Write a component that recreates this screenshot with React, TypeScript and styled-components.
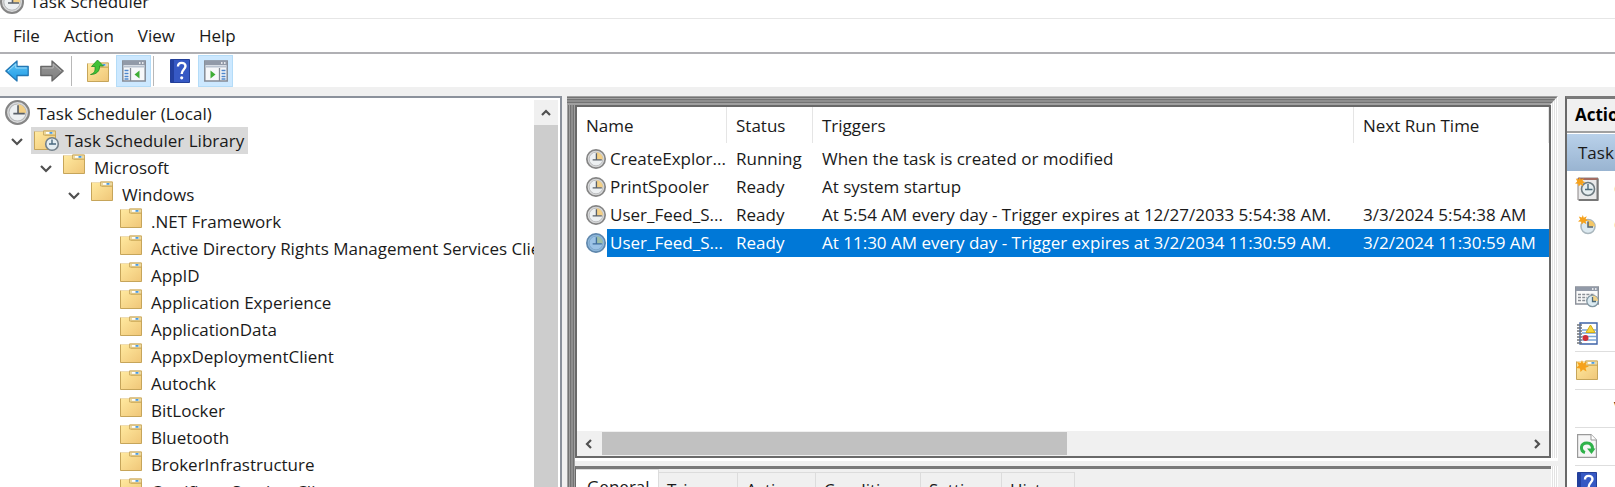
import React from 'react';
import styled, { createGlobalStyle, css } from 'styled-components';

const GlobalStyle = createGlobalStyle`
  * { box-sizing: border-box; }
  body { margin: 0; overflow: hidden; }
  button { font: inherit; color: inherit; background: none; border: 0; padding: 0; margin: 0; text-align: left; white-space: nowrap; }
  svg { display: block; flex: none; overflow: visible; }
`;

const Window = styled.div`
  display: flex;
  flex-direction: column;
  height: 100vh;
  overflow: hidden;
  background: #f0f0f0;
  color: #1a1a1a;
  font: 17px/24px 'Open Sans', 'Segoe UI', sans-serif;
`;

const TitleBar = styled.header`
  display: flex;
  align-items: flex-end;
  gap: 6px;
  height: 18px;
  flex: none;
  padding-bottom: 4px;
  overflow: hidden;
  background: #fff;
`;

const Title = styled.h1`
  margin: 0;
  font-size: 17px;
  line-height: 24px;
  font-weight: 400;
`;

const MenuBar = styled.nav`
  display: flex;
  flex: none;
  height: 36px;
  padding: 1px 0 0 1px;
  background: #fff;
  border-top: 1px solid #e6e6e6;
  border-bottom: 2px solid #b0b0b4;
`;

const MenuItem = styled.button`
  padding: 0 12px;
`;

const Toolbar = styled.div`
  display: flex;
  flex: none;
  gap: 1px;
  height: 33px;
  padding-top: 1px;
  background: #fff;
`;

const ToolButton = styled.button<{ $on?: boolean }>`
  display: flex;
  align-items: center;
  justify-content: center;
  width: 34px;
  ${p => p.$on && css`width: 35px; background: #cce8ff; border: 1px solid #b4dcf8;`}
`;

const ToolDivider = styled.div`
  width: 1px;
  margin: 1px 8px 1px 1px;
  background: #b8b8b8;
`;

const Main = styled.main`
  display: flex;
  flex: 1;
  min-height: 0;
  padding-top: 9px;
`;

const TreePane = styled.section`
  display: flex;
  width: 562px;
  flex: none;
  padding: 2px 2px 0 0;
  background: #fff;
  border-top: 2px solid #8b919b;
  border-right: 2px solid #8b919b;
`;

const Tree = styled.ul`
  flex: 1;
  min-width: 0;
  margin: 0;
  padding: 0;
  list-style: none;
  overflow: hidden;
`;

const TreeRow = styled.li<{ $indent: number }>`
  display: flex;
  height: 27px;
  padding-left: ${p => p.$indent}px;
  white-space: nowrap;
`;

const Expander = styled.button`
  display: flex;
  align-items: center;
  justify-content: center;
  width: 22px;
  margin: 0 0 0 6px;
`;

const TreeNode = styled.button<{ $selected?: boolean; $root?: boolean }>`
  display: flex;
  align-items: flex-start;
  gap: ${p => (p.$root ? 7 : 9)}px;
  margin-left: 3px;
  padding: 0 4px 0 ${p => (p.$root ? 2 : 3)}px;
  line-height: 27px;
  ${p => p.$selected && css`background: #d9d9d9;`}
`;

const VScroll = styled.div`
  display: flex;
  flex-direction: column;
  width: 24px;
  flex: none;
  background: #cdcdcd;
`;

const ScrollButton = styled.button`
  display: flex;
  flex: none;
  align-items: center;
  justify-content: center;
  width: 24px;
  height: 25px;
  background: #f0f0f0;
`;

const Center = styled.div`
  display: flex;
  flex: 1;
  flex-direction: column;
  min-width: 0;
  margin: 0 7px 0 5px;
  padding: 0 7px 0 8px;
  background: linear-gradient(90deg, #a0a0a0 1px, #737373 1px 2px, #a0a0a0 2px 3px, #737373 3px 4px, #8e8e8e 4px 6px, #737373 6px 7px, #a0a0a0 7px 8px, transparent 8px) left / 8px 100% no-repeat,
    linear-gradient(270deg, #fff 1px, #e3e3e3 1px 2px, #fff 2px 3px, #e3e3e3 3px 4px, #fff 4px 5px, #e3e3e3 5px 6px, #fff 6px 7px) right / 7px 100% no-repeat;
`;

const FrameTop = styled.div`
  flex: none;
  height: 9px;
  margin: 0 -7px 0 -8px;
  clip-path: polygon(0 0, 100% 0, calc(100% - 8px) 100%, 0 100%);
  background: linear-gradient(#a0a0a0 1px, #737373 1px 2px, #a0a0a0 2px 3px, #737373 3px 4px, #8e8e8e 4px 6px, #737373 6px 7px, #a0a0a0 7px 9px);
`;

const TaskPane = styled.section`
  display: flex;
  flex: 1;
  flex-direction: column;
  min-height: 0;
  border: 2px solid #696969;
  background: #fff;
`;

const TaskTable = styled.table`
  width: 100%;
  table-layout: fixed;
  border-collapse: separate;
  border-spacing: 0;
`;

const HeadCell = styled.th<{ $width?: number }>`
  width: ${p => (p.$width ? `${p.$width}px` : 'auto')};
  height: 36px;
  padding: 1px 9px 0 9px;
  font-weight: 400;
  text-align: left;
  background: linear-gradient(#e5e5e5, #e5e5e5) right / 1px 100% no-repeat;
`;

const Cell = styled.td<{ $selected?: boolean }>`
  height: 28px;
  padding: 0 0 0 9px;
  line-height: 28px;
  white-space: nowrap;
  overflow: hidden;
  ${p => p.$selected && css`background: #0078d7; color: #fff;`}
`;

const NameCell = styled(Cell)`
  background: none;
`;

const NameBox = styled.div`
  display: flex;
  align-items: center;
  gap: 1px;
`;

const NameLabel = styled.span<{ $selected?: boolean }>`
  flex: 1;
  padding-left: 3px;
  ${p => p.$selected && css`background: #0078d7; color: #fff;`}
`;

const TableBody = styled.tbody`
  &::before { content: ''; display: block; height: 2px; }
`;

const HScroll = styled.div`
  display: flex;
  justify-content: space-between;
  flex: none;
  height: 25px;
  margin-top: auto;
  background: #f0f0f0;
`;

const HTrack = styled.div`
  flex: 1;
  padding: 1px 0 1px 1px;
`;

const HThumb = styled.div`
  width: 50.4%;
  height: 100%;
  background: #c1c1c1;
`;

const PaneGap = styled.div`
  flex: none;
  height: 8px;
  margin-right: -7px;
  border-top: 3px solid #fff;
  background: #f0f0f0;
`;

const DetailPane = styled.section`
  flex: none;
  height: 21px;
  overflow: hidden;
  padding-right: 3px;
  border-top: 3px solid #7a7a7a;
  border-left: 1px solid #696969;
  background: #f0f0f0;
`;

const Tabs = styled.div`
  display: flex;
  align-items: flex-start;
`;

const Tab = styled.button<{ $width: number; $active?: boolean }>`
  width: ${p => p.$width}px;
  height: 36px;
  margin-top: 3px;
  padding: 0 8px;
  border: 1px solid #dcdcdc;
  border-left: 0;
  ${p => p.$active && css`margin-top: 0; padding: 0 11px; background: #fff;`}
`;

const ActionPane = styled.aside`
  width: 50px;
  flex: none;
  overflow: hidden;
  border-top: 3px solid #7a7a7a;
  border-left: 2px solid #696969;
  background: #fff;
`;

const ActionTitle = styled.h2`
  margin: 0;
  padding: 3px 8px 4px;
  font-size: 17px;
  line-height: 25px;
  font-weight: 700;
  color: #000;
  background: #f0f0f0;
  border-bottom: 2px solid #a0a0a0;
  white-space: nowrap;
`;

const ActionGroup = styled.button`
  display: block;
  width: 100%;
  height: 38px;
  padding: 0 11px;
  overflow: hidden;
  background: linear-gradient(#b9d1ea, #99b4d1);
  border-top: 1px solid #fff;
`;

const ActionItem = styled.button<{ $line?: boolean }>`
  display: flex;
  align-items: center;
  gap: 15px;
  width: 100%;
  height: ${p => (p.$line ? 38 : 36)}px;
  padding-left: 8px;
  ${p => p.$line && css`background: linear-gradient(#dedede, #dedede) 8px 0 / 100% 1px no-repeat;`}
`;

const IconSlot = styled.span`
  display: flex;
  justify-content: center;
  width: 24px;
  flex: none;
`;

function Clock({ size = 20, tint = false }: { size?: number; tint?: boolean }) {
  return (
    <svg width={size} height={size} viewBox="0 0 24 24">
      <circle cx="12" cy="12" r="11" fill={tint ? '#8fb8dc' : '#d9dadb'} stroke={tint ? '#5f87ac' : '#858585'} strokeWidth="2" />
      <circle cx="12" cy="12" r="8.2" fill={tint ? '#9cc3e6' : '#edf0f2'} stroke={tint ? '#7ba3c8' : '#b4b6b8'} />
      <path d="M12.5 4a8 8 0 0 1 7.7 8.5h-7.7z" fill={tint ? '#9fbfa8' : '#f3cf85'} />
      <path d="M12.5 5v8H19M8 13h4" fill="none" stroke={tint ? '#3f6e9c' : '#5a6068'} strokeWidth="1.6" />
    </svg>
  );
}

function FolderShape() {
  return (
    <>
      <path d="M.5 1.500h9v-1h12v19H.5z" fill="#dfbc68" />
      <path d="M1 2h8.500l1.500 4H21v13H1z" fill="url(#folder)" />
      <path d="M.5 1.500v18h21v-16" fill="none" stroke="#c6a55a" />
      <path d="M9.500 1h12v4h-12z" fill="#ecd9a0" stroke="#c6a55a" strokeWidth=".8" />
      <path d="M12 2h7v1.800h-7z" fill="#fff" />
      <path d="M15.500 2h3v1.800h-3z" fill="#4b9be0" />
    </>
  );
}

function Folder() {
  return <svg width="22" height="20" viewBox="0 0 22 20"><FolderShape /></svg>;
}

function SmallClock() {
  return (
    <>
      <circle cx="18" cy="17" r="6.300" fill="#e4edf2" stroke="#73808a" strokeWidth="1.600" />
      <path d="M18 12.500V17h4M15 17h3" fill="none" stroke="#4a6a80" strokeWidth="1.400" />
    </>
  );
}

function LibraryFolder() {
  return <svg width="22" height="24" viewBox="0 0 22 24"><g transform="translate(0 3)"><FolderShape /></g><SmallClock /></svg>;
}

function Star() {
  return <path d="M6 0l1.200 3.400L11 1.500 9.500 5l3.500 1.500-3.500 1.200 1 3.800-3.500-2L4.500 12 4 8.500 0 8l2.800-2.500L1 2l3.800 1z" fill="#f6a21c" />;
}

function NewFolder() {
  return <svg width="22" height="20" viewBox="0 0 22 20"><FolderShape /><Star /></svg>;
}

function UpFolder() {
  return (
    <svg width="22" height="22" viewBox="0 0 22 22">
      <g transform="translate(0 2)"><FolderShape /></g>
      <path d="M3.500 14.500c4-1 5-4 4.500-8H4.500L10.500 0l6 6H12.500c.5 5-3 8.500-9 8.500z" fill="#42c236" stroke="#1f9123" strokeWidth=".8" />
    </svg>
  );
}

function Arrow({ back = false }: { back?: boolean }) {
  return (
    <svg width="24" height="22" viewBox="0 0 24 22">
      <g transform={back ? undefined : 'translate(24 0) scale(-1 1)'}>
        <path d="M.8 11L12 1v5.500h11.200v9H12V21z" fill={back ? 'url(#blue)' : 'url(#gray)'} stroke={back ? '#2377b4' : '#686868'} strokeWidth="1.300" strokeLinejoin="round" />
        <path d="M3 11l7.800-7V8h11" fill="none" stroke={back ? '#9fdcfa' : '#b5b5b5'} />
      </g>
    </svg>
  );
}

function PaneIcon({ right = false }: { right?: boolean }) {
  return (
    <svg width="24" height="22" viewBox="0 0 24 22">
      <path d="M.8 1h22.400v20H.8z" fill="#f7f8fa" stroke="#858b96" strokeWidth="1.500" />
      <path d="M1 1h22v4H1z" fill="#929aa8" />
      <path d="M17 3h1.500M20 3h1.500" stroke="#fff" strokeWidth="1.500" />
      <path d="M1 6.500h22" stroke="#b9c2cf" strokeWidth="2" />
      <path d={right ? 'M15.500 8v13' : 'M8.500 8v13'} stroke="#858b96" strokeWidth="1.300" />
      <path d={right ? 'M17.500 10.500h4M17.500 13.500h4M17.500 16.500h4M17.500 19h4' : 'M2.500 10.500h4M2.500 13.500h4M2.500 16.500h4M2.500 19h4'} stroke="#4e86cc" strokeWidth="1.500" />
      <path d={right ? 'M6.500 10.500l5 4-5 4z' : 'M17.500 10.500l-5 4 5 4z'} fill="#40ae35" />
    </svg>
  );
}

function HelpIcon() {
  return (
    <svg width="20" height="24" viewBox="0 0 20 24">
      <path d="M.5.5h19v23H.5z" fill="#3659c4" stroke="#233f99" />
      <path d="M1 1h3v22H1z" fill="#2340a0" />
      <path d="M8 7.500c0-5 7.500-4.500 7.500-.5 0 3.500-3.800 3.700-3.800 8" fill="none" stroke="#fff" strokeWidth="2.400" />
      <circle cx="11.700" cy="18.800" r="1.600" fill="#fff" />
    </svg>
  );
}

function BasicTaskIcon() {
  return (
    <svg width="24" height="24" viewBox="0 0 24 24">
      <path d="M3 1h20v22H3z" fill="#e9e9ea" stroke="#8a8585" />
      <path d="M3 1h20v2H3z" fill="#a46c62" />
      <path d="M22.500 2v21H4" fill="none" stroke="#777" strokeWidth="2" />
      <circle cx="13" cy="12" r="6.500" fill="#e6eef1" stroke="#6d7a80" strokeWidth="1.600" />
      <path d="M13 7v5.500h4.500M10 12.500h3" fill="none" stroke="#4d6b7a" strokeWidth="1.400" />
      <g transform="scale(.8)"><Star /></g>
    </svg>
  );
}

function CreateTaskIcon() {
  return (
    <svg width="18" height="20" viewBox="0 0 18 20">
      <circle cx="10" cy="11.500" r="7" fill="#dce9f0" stroke="#a9b6bd" strokeWidth="1.600" />
      <path d="M10 5a7 7 0 0 1 7 6.500h-7z" fill="#f4c766" />
      <path d="M10 6.500V12h5" fill="none" stroke="#56646c" strokeWidth="1.500" />
      <g transform="scale(.8)"><Star /></g>
    </svg>
  );
}

function RunningIcon() {
  return (
    <svg width="24" height="22" viewBox="0 0 24 22">
      <path d="M.7 1h22.600v17H.7z" fill="#fafafa" stroke="#8c919a" strokeWidth="1.400" />
      <path d="M1 1h22v4H1z" fill="#929aa8" />
      <path d="M17 3h1.500M20 3h1.500" stroke="#fff" strokeWidth="1.500" />
      <path d="M3 8.500h17M3 11.500h9M3 14.500h9" stroke="#8a8f96" strokeWidth="1.300" strokeDasharray="3 1.200" />
      <circle cx="17.500" cy="15" r="5.700" fill="#dcebf2" stroke="#8297a2" strokeWidth="1.300" />
      <path d="M17.500 9.500a5.500 5.500 0 0 1 5.500 5.500h-5.500z" fill="#f1d18a" />
      <path d="M17.500 11v4.500h3.500" fill="none" stroke="#4d6b7a" strokeWidth="1.300" />
    </svg>
  );
}

function HistoryIcon() {
  return (
    <svg width="22" height="23" viewBox="0 0 22 23">
      <path d="M4 1h17v21H4z" fill="#fff" stroke="#3e63a8" strokeWidth="1.400" />
      <path d="M6 8h14M6 11h14M6 14.500h14M6 18h14" stroke="#78a7d8" strokeWidth="1.500" />
      <path d="M1 3h5M1 6h5M1 9h5M1 12h5M1 15h5M1 18h5M1 21h5" stroke="#70747a" strokeWidth="1.300" />
      <path d="M14.500 3l4.500 7.500h-9z" fill="#f5d63a" stroke="#d4ac18" />
      <circle cx="9.500" cy="16" r="3" fill="#d02e38" />
    </svg>
  );
}

function RefreshIcon() {
  return (
    <svg width="20" height="24" viewBox="0 0 20 24">
      <path d="M.6.6H14l5.400 5.400v17.400H.6z" fill="#f6f6f6" stroke="#9a9a9a" strokeWidth="1.200" />
      <path d="M14 .6V6h5.400" fill="#fff" stroke="#9a9a9a" />
      <path d="M8 18.500c-5-1.500-5-9.500 2-9.500 4 0 5.500 2.500 5.500 6" fill="none" stroke="#2fb24a" strokeWidth="3" />
      <path d="M10 14.500h8.500L14.500 20z" fill="#2fb24a" />
    </svg>
  );
}

function Chevron({ d }: { d: string }) {
  return <svg width="10" height="10" viewBox="0 0 10 10"><path d={d} fill="none" stroke="#505050" strokeWidth="2.200" /></svg>;
}

function Gradients() {
  return (
    <svg width="0" height="0" style={{ position: 'absolute' }} aria-hidden="true">
      <defs>
        <linearGradient id="folder" x1="0" y1="0" x2="1" y2="1"><stop stopColor="#ffe99f" /><stop offset="1" stopColor="#f0c779" /></linearGradient>
        <linearGradient id="blue" x1="0" y1="0" x2="0" y2="1"><stop stopColor="#5cc3f5" /><stop offset="1" stopColor="#1f9be6" /></linearGradient>
        <linearGradient id="gray" x1="0" y1="0" x2="0" y2="1"><stop stopColor="#979797" /><stop offset="1" stopColor="#808080" /></linearGradient>
      </defs>
    </svg>
  );
}

const branches = [
  { label: 'Task Scheduler Library', level: 0, selected: true },
  { label: 'Microsoft', level: 1 },
  { label: 'Windows', level: 2 },
];

const leaves = [
  '.NET Framework', 'Active Directory Rights Management Services Client', 'AppID', 'Application Experience',
  'ApplicationData', 'AppxDeploymentClient', 'Autochk', 'BitLocker', 'Bluetooth', 'BrokerInfrastructure',
  'CertificateServicesClient',
];

const tasks = [
  { name: 'CreateExplor...', status: 'Running', trigger: 'When the task is created or modified', next: '' },
  { name: 'PrintSpooler', status: 'Ready', trigger: 'At system startup', next: '' },
  { name: 'User_Feed_S...', status: 'Ready', trigger: 'At 5:54 AM every day - Trigger expires at 12/27/2033 5:54:38 AM.', next: '3/3/2024 5:54:38 AM' },
  { name: 'User_Feed_S...', status: 'Ready', trigger: 'At 11:30 AM every day - Trigger expires at 3/2/2034 11:30:59 AM.', next: '3/2/2024 11:30:59 AM', selected: true },
];

const tabs = [
  { label: 'General', width: 83 }, { label: 'Triggers', width: 79 }, { label: 'Actions', width: 78 },
  { label: 'Conditions', width: 105 }, { label: 'Settings', width: 81 }, { label: 'History', width: 73 },
];

const actions = [
  { label: 'Create Basic Task...', icon: <BasicTaskIcon /> },
  { label: 'Create Task...', icon: <CreateTaskIcon /> },
  { label: 'Import Task...' },
  { label: 'Display All Running Tasks', icon: <RunningIcon /> },
  { label: 'Enable All Tasks History', icon: <HistoryIcon /> },
  { label: 'New Folder...', icon: <NewFolder />, line: true },
  { label: 'View', line: true },
  { label: 'Refresh', icon: <RefreshIcon />, line: true },
  { label: 'Help', icon: <HelpIcon />, line: true },
];

export default function App() {
  return (
    <Window>
      <GlobalStyle />
      <Gradients />
      <TitleBar>
        <Clock size={24} />
        <Title>Task Scheduler</Title>
      </TitleBar>
      <MenuBar>
        {['File', 'Action', 'View', 'Help'].map(m => <MenuItem key={m}>{m}</MenuItem>)}
      </MenuBar>
      <Toolbar>
        <ToolButton aria-label="Back"><Arrow back /></ToolButton>
        <ToolButton aria-label="Forward"><Arrow /></ToolButton>
        <ToolDivider />
        <ToolButton aria-label="Up one level"><UpFolder /></ToolButton>
        <ToolButton $on aria-label="Show console tree"><PaneIcon /></ToolButton>
        <ToolDivider />
        <ToolButton aria-label="Help"><HelpIcon /></ToolButton>
        <ToolButton $on aria-label="Show action pane"><PaneIcon right /></ToolButton>
      </Toolbar>
      <Main>
        <TreePane>
          <Tree>
            <TreeRow $indent={0}>
              <TreeNode $root><Clock size={25} /><span>Task Scheduler (Local)</span></TreeNode>
            </TreeRow>
            {branches.map(b => (
              <TreeRow key={b.label} $indent={Math.round(b.level * 28.5)}>
                <Expander aria-label={`Collapse ${b.label}`}><Chevron d="M0 3l5 5 5-5" /></Expander>
                <TreeNode $selected={b.selected}>
                  {b.selected ? <LibraryFolder /> : <Folder />}
                  <span>{b.label}</span>
                </TreeNode>
              </TreeRow>
            ))}
            {leaves.map(l => (
              <TreeRow key={l} $indent={114}>
                <TreeNode><Folder /><span>{l}</span></TreeNode>
              </TreeRow>
            ))}
          </Tree>
          <VScroll>
            <ScrollButton aria-label="Scroll up"><Chevron d="M1 7l4-4 4 4" /></ScrollButton>
          </VScroll>
        </TreePane>
        <Center>
          <FrameTop />
          <TaskPane>
            <TaskTable>
              <thead>
                <tr>
                  <HeadCell $width={150}>Name</HeadCell>
                  <HeadCell $width={86}>Status</HeadCell>
                  <HeadCell $width={541}>Triggers</HeadCell>
                  <HeadCell>Next Run Time</HeadCell>
                </tr>
              </thead>
              <TableBody>
                {tasks.map((t, i) => (
                  <tr key={i}>
                    <NameCell>
                      <NameBox>
                        <Clock tint={t.selected} />
                        <NameLabel $selected={t.selected}>{t.name}</NameLabel>
                      </NameBox>
                    </NameCell>
                    <Cell $selected={t.selected}>{t.status}</Cell>
                    <Cell $selected={t.selected}>{t.trigger}</Cell>
                    <Cell $selected={t.selected}>{t.next}</Cell>
                  </tr>
                ))}
              </TableBody>
            </TaskTable>
            <HScroll>
              <ScrollButton aria-label="Scroll left"><Chevron d="M7 1L3 5l4 4" /></ScrollButton>
              <HTrack><HThumb /></HTrack>
              <ScrollButton aria-label="Scroll right"><Chevron d="M3 1l4 4-4 4" /></ScrollButton>
            </HScroll>
          </TaskPane>
          <PaneGap />
          <DetailPane>
            <Tabs>
              {tabs.map((t, i) => <Tab key={t.label} $width={t.width} $active={i === 0}>{t.label}</Tab>)}
            </Tabs>
          </DetailPane>
        </Center>
        <ActionPane>
          <ActionTitle>Actions</ActionTitle>
          <ActionGroup>Task Scheduler Library</ActionGroup>
          {actions.map(a => (
            <ActionItem key={a.label} $line={a.line}>
              <IconSlot>{a.icon}</IconSlot>
              <span>{a.label}</span>
            </ActionItem>
          ))}
        </ActionPane>
      </Main>
    </Window>
  );
}
